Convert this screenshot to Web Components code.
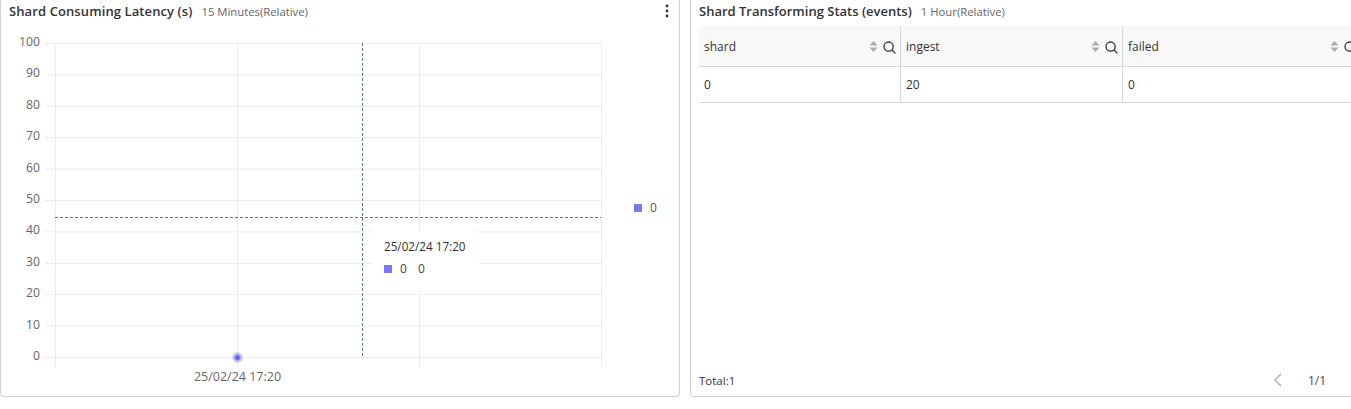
<!DOCTYPE html>
<html>
<head>
<meta charset="utf-8">
<title>Shard stats</title>
<style>
    html, body { margin: 0; padding: 0; background: #fff; overflow: hidden; }
    body { font-family: "Open Sans", "Noto Sans", sans-serif; color: #333; }
    .rad { display: flex; gap: 10px; width: 1370px; height: 397px; }
</style>
</head>
<body>
<div class="rad">
    <dash-panel tittel="Shard Consuming Latency (s)" tid="15 Minutes(Relative)" meny style="width:680px;--tittel-luft:.1px">
        <linje-graf></linje-graf>
    </dash-panel>
    <dash-panel tittel="Shard Transforming Stats (events)" tid="1 Hour(Relative)" style="width:680px">
        <data-tabell></data-tabell>
    </dash-panel>
</div>

<script>
class DashPanel extends HTMLElement {
    constructor() {
        super()
        this.shadow = this.attachShadow({ mode: 'open' })
    }

    connectedCallback() {
        const meny = this.hasAttribute('meny') ? `
            <svg class="meny" width="4" height="14" viewBox="0 0 4 14">
                <circle cx="2" cy="2" r="1.4"/><circle cx="2" cy="7" r="1.4"/><circle cx="2" cy="12" r="1.4"/>
            </svg>` : ''

        this.shadow.innerHTML = `
            <style>
                :host {
                    display: flex;
                    flex-direction: column;
                    box-sizing: border-box;
                    height: 397px;
                    flex: none;
                    background: #fff;
                    border: 1px solid #d0d2d6;
                    border-top: none;
                    border-radius: 0 0 4px 4px;
                    overflow: hidden;
                }
                .topp {
                    display: flex;
                    align-items: baseline;
                    flex: none;
                    height: 25px;
                    padding: 1px 8px 0;
                    box-sizing: border-box;
                    position: relative;
                }
                .tittel { font-size: 13px; font-weight: 600; color: #333; line-height: 20px; letter-spacing: var(--tittel-luft, 0); }
                .tid { font-size: 11.3px; color: #666; margin-left: 9px; line-height: 20px; }
                .meny { position: absolute; right: 10px; top: 4px; fill: #333; }
                .innhold { flex: 1; min-height: 0; display: flex; flex-direction: column; }
            </style>
            <div class="topp">
                <span class="tittel">${this.getAttribute('tittel')}</span>
                <span class="tid">${this.getAttribute('tid')}</span>
                ${meny}
            </div>
            <div class="innhold"><slot></slot></div>
        `
    }
}

class LinjeGraf extends HTMLElement {
    constructor() {
        super()
        this.shadow = this.attachShadow({ mode: 'open' })
    }

    // y axis goes 0-100 in 10 steps, offsets are relative to the panel
    rutenett() {
        let yeh = ""
        for (let i = 0; i <= 10; i++) {
            const y = 18.5 + i * 31.4
            yeh += `<line x1="44" x2="600" y1="${y}" y2="${y}" class="g"/>`
            yeh += `<text x="39" y="${y + 2.5}" text-anchor="end" class="akse">${100 - i * 10}</text>`
        }
        ;[54.5, 236.5, 418.5, 600.5].forEach((x) => {
            yeh += `<line x1="${x}" x2="${x}" y1="18" y2="343" class="g"/>`
        })
        return yeh
    }

    connectedCallback() {
        this.shadow.innerHTML = `
            <style>
                :host { display: block; position: relative; height: 371px; }
                svg { display: block; }
                text { font-size: 12.5px; fill: #666; font-family: "Open Sans", "Noto Sans", sans-serif; }
                text.akse { font-size: 12.2px; }
                .g { stroke: #ececec; stroke-width: 1; }
                .k { stroke: #5a7a8a; stroke-width: 1; stroke-dasharray: 3 2; }
                .tips {
                    position: absolute;
                    left: 371px;
                    top: 205px;
                    width: 106px;
                    height: 60px;
                    box-sizing: border-box;
                    padding: 7px 12px;
                    background: rgba(255, 255, 255, .92);
                    font-size: 12px;
                    color: #333;
                    white-space: nowrap;
                }
                .tips .tt { font-size: 11.7px; line-height: 18px; margin-bottom: 5px; }
                .tips .rad { display: flex; align-items: center; line-height: 18px; color: #444; }
                .prikk { width: 8px; height: 8px; background: #7c76fb; margin-right: 8px; flex: none; }
                .tips .rad b { font-weight: 400; margin-left: 11px; }
                .forklaring {
                    position: absolute;
                    left: 633px;
                    top: 174px;
                    display: flex;
                    align-items: center;
                    font-size: 12px;
                    line-height: 18px;
                    color: #555;
                }
            </style>
            <svg width="678" height="371">
                ${this.rutenett()}
                <line x1="54" x2="600" y1="192.5" y2="192.5" class="k"/>
                <line x1="361.5" x2="361.5" y1="18" y2="332" class="k"/>
                <circle cx="236.5" cy="332.5" r="5" fill="#7c76fb" fill-opacity=".5"/>
                <circle cx="236.5" cy="332.5" r="2.5" fill="#6a63f6"/>
                <text x="236.5" y="356" text-anchor="middle">25/02/24 17:20</text>
            </svg>
            <div class="tips">
                <div class="tt">25/02/24 17:20</div>
                <div class="rad"><span class="prikk"></span>0<b>0</b></div>
            </div>
            <div class="forklaring"><span class="prikk"></span>0</div>
        `
    }
}

class DataTabell extends HTMLElement {
    constructor(kolonner = [
        { navn: "shard", bredde: 202, verdi: "0" },
        { navn: "ingest", bredde: 222, verdi: "20" },
        { navn: "failed", bredde: 239, verdi: "0" }
    ]) {
        super()
        this.shadow = this.attachShadow({ mode: 'open' })
        this.kolonner = kolonner
    }

    ikoner() {
        return `
            <svg class="sort" width="9" height="11" viewBox="0 0 9 11">
                <path d="M4.5 0 8.5 4.5H.5z M.5 6.5h8L4.5 11z" fill="#a8abb0"/>
            </svg>
            <svg class="sok" width="13" height="13" viewBox="0 0 13 13" fill="none" stroke="#333" stroke-width="1.3">
                <circle cx="5.6" cy="5.6" r="4.6"/><path d="M9 9l3.4 3.4"/>
            </svg>`
    }

    connectedCallback() {
        const hoder = this.kolonner.map((k) => `
            <div class="th" style="width:${k.bredde}px"><span>${k.navn}</span>${this.ikoner()}</div>
        `).join('')
        const rad = this.kolonner.map((k) => `
            <div class="td" style="width:${k.bredde}px">${k.verdi}</div>
        `).join('')

        this.shadow.innerHTML = `
            <style>
                :host {
                    display: flex;
                    flex-direction: column;
                    height: 371px;
                    padding: 1px 0 0 8px;
                    box-sizing: border-box;
                    font-size: 12px;
                    color: #333;
                }
                .hode, .rad { display: flex; flex: none; width: 663px; }
                .hode { background: #f8f8f8; height: 40px; border-bottom: 1px solid #d6d7da; }
                .rad { height: 36px; border-bottom: 1px solid #d6d7da; box-sizing: border-box; }
                .th, .td {
                    flex: none;
                    box-sizing: border-box;
                    display: flex;
                    align-items: center;
                    padding: 0 5px;
                    border-right: 1px solid #d6d7da;
                }
                .th { padding: 0 4px 0 5px; font-weight: 500; }
                .th span { flex: 1; }
                .sort { margin-right: 5px; }
                .sok { margin-top: 3px; }
                .bunn {
                    margin-top: auto;
                    height: 32px;
                    box-sizing: border-box;
                    display: flex;
                    align-items: center;
                    width: 663px;
                    font-size: 11.5px;
                }
                .bunn .tom { flex: 1; }
                .bunn svg { margin-right: 26px; }
                .bunn .side { font-size: 12px; margin-right: 36px; color: #445; }
            </style>
            <div class="hode">${hoder}</div>
            <div class="rad">${rad}</div>
            <div class="bunn">
                <span>Total:1</span>
                <span class="tom"></span>
                <svg width="9" height="14" viewBox="0 0 9 14" fill="none" stroke="#a9adb3" stroke-width="1.3"><path d="M8 1 2 7l6 6"/></svg>
                <span class="side">1/1</span>
            </div>
        `
    }
}

customElements.define('dash-panel', DashPanel)
customElements.define('linje-graf', LinjeGraf)
customElements.define('data-tabell', DataTabell)
</script>
</body>
</html>
